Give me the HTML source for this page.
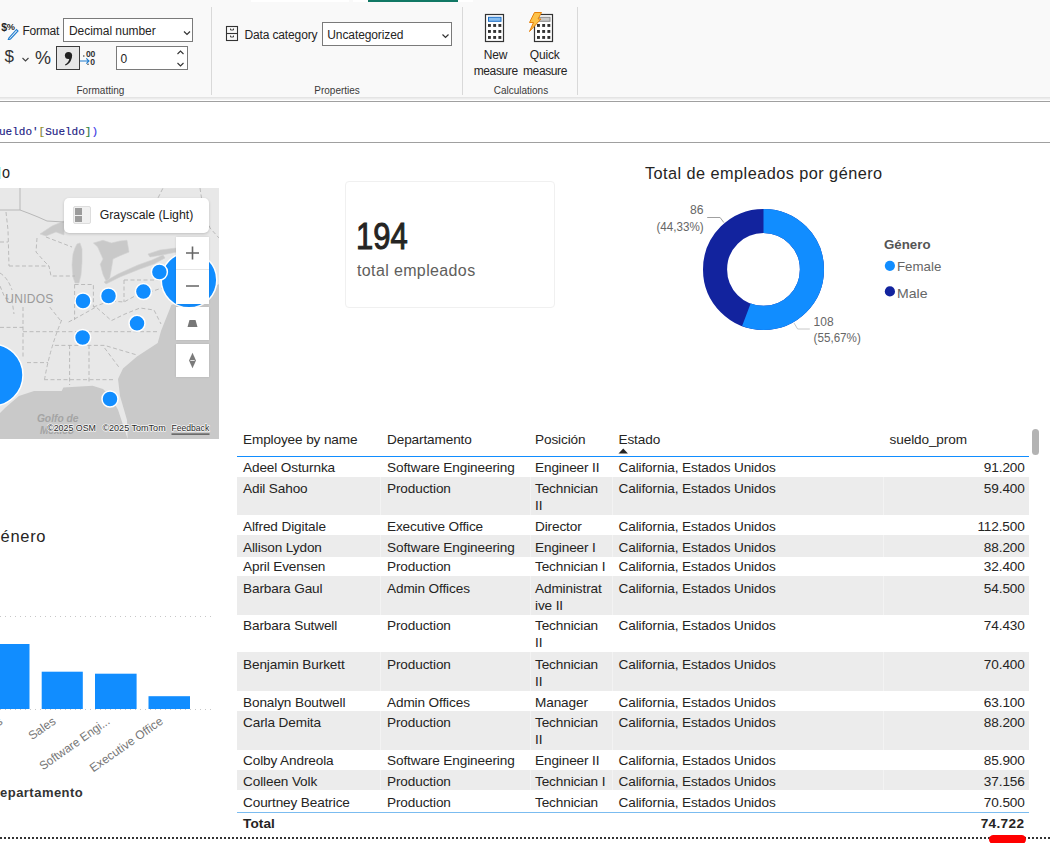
<!DOCTYPE html>
<html><head><meta charset="utf-8">
<style>
*{margin:0;padding:0;box-sizing:border-box}
html,body{width:1050px;height:843px;overflow:hidden;background:#fff}
body{position:relative;font-family:"Liberation Sans",sans-serif;color:#252423}
.a{position:absolute;white-space:nowrap;line-height:1}
#ribbon{position:absolute;left:0;top:0;width:1050px;height:97px;background:#f9f9f9}
.sep{position:absolute;top:7px;width:1px;height:88px;background:#d9d9d9}
.glabel{position:absolute;font-size:10px;color:#3b3a39;line-height:1}
.box{position:absolute;background:#fff;border:1px solid #7a7a7a}
.rt{font-size:12px;color:#252423}
.tt{font-size:13.6px;color:#252423;letter-spacing:-0.12px}
</style></head><body>

<div id="ribbon">
  <div class="a" style="left:251px;top:0;width:98px;height:2px;background:#fff"></div>
  <div class="a" style="left:353px;top:0;width:15px;height:2px;background:#fff"></div>
  <div class="a" style="left:368px;top:0;width:90px;height:2px;background:#117865"></div>
  <div class="a" style="left:458px;top:0;width:15px;height:2px;background:#fff"></div>
</div>

<!-- Formatting group -->
<svg class="a" style="left:0;top:20px" width="22" height="20" viewBox="0 0 22 20">
  <text x="1.2" y="11.2" font-family="Liberation Sans" font-weight="bold" font-size="10.5" fill="#252423">$</text>
  <text x="6.8" y="9.6" font-family="Liberation Sans" font-weight="bold" font-size="9.2" fill="#252423">%</text>
  <path d="M9 17.8 L16.5 9.5 L18 11 L10.5 19 L8.2 19.8 Z" fill="none" stroke="#1e7ccf" stroke-width="1.1"/>
</svg>
<div class="a rt" style="left:22.5px;top:25px;font-size:12px;letter-spacing:-0.25px">Format</div>
<div class="box" style="left:63px;top:18px;width:130px;height:24px"></div>
<div class="a rt" style="left:69px;top:25px;letter-spacing:-0.05px">Decimal number</div>
<svg class="a" style="left:182.5px;top:29.5px" width="8" height="6" viewBox="0 0 8 6"><path d="M1 1.5 L4 4.5 L7 1.5" fill="none" stroke="#333" stroke-width="1.2"/></svg>

<div class="a" style="left:4.5px;top:48px;font-size:17px;color:#333">$</div>
<svg class="a" style="left:21px;top:56px" width="9" height="7" viewBox="0 0 9 7"><path d="M1.5 2 L4.5 5 L7.5 2" fill="none" stroke="#444" stroke-width="1.1"/></svg>
<div class="a" style="left:35px;top:49px;font-size:18px;color:#333">%</div>
<div class="a" style="left:56px;top:46px;width:24px;height:24px;background:#e6e6e6;border:1px solid #3c3c3c"></div>
<svg class="a" style="left:62px;top:50px" width="12" height="17" viewBox="0 0 12 17"><circle cx="6.5" cy="5.5" r="3.6" fill="#222"/><path d="M9.8 5.5 C10 10 8 13.5 3.5 15.5 L3 14.5 C6 13 7.5 10.5 7.2 7.5 Z" fill="#222"/></svg>
<svg class="a" style="left:79px;top:48px" width="18" height="19" viewBox="0 0 18 19">
  <text x="7" y="8.6" font-family="Liberation Sans" font-weight="bold" font-size="8.6" fill="#333" letter-spacing="-0.3">00</text>
  <text x="11.2" y="16.8" font-family="Liberation Sans" font-weight="bold" font-size="8.6" fill="#333">0</text>
  <circle cx="4.8" cy="8" r="0.75" fill="#333"/><circle cx="9" cy="16.3" r="0.75" fill="#333"/>
  <path d="M1 13 H10 M7.3 10.3 L10 13 L7.3 15.7" fill="none" stroke="#1e7ccf" stroke-width="1.1"/>
</svg>
<div class="box" style="left:116px;top:46px;width:72px;height:24px"></div>
<div class="a rt" style="left:120.5px;top:53px">0</div>
<svg class="a" style="left:176px;top:49px" width="9" height="19" viewBox="0 0 9 19"><path d="M1.5 5 L4.5 2 L7.5 5 M1.5 14 L4.5 17 L7.5 14" fill="none" stroke="#333" stroke-width="1.1"/></svg>
<div class="glabel" style="left:76.5px;top:86px">Formatting</div>
<div class="sep" style="left:211px"></div>

<!-- Properties group -->
<svg class="a" style="left:225px;top:25px" width="14" height="17" viewBox="0 0 14 17"><rect x="1.5" y="1.5" width="11" height="14" fill="none" stroke="#333" stroke-width="1.1"/><path d="M1.5 8.5 H12.5" stroke="#333" stroke-width="1.1"/><path d="M5.5 3.5 V5 H8.5 V3.5 M5.5 10.5 V12 H8.5 V10.5" fill="none" stroke="#333" stroke-width="0.9"/></svg>
<div class="a rt" style="left:244.4px;top:29px;letter-spacing:-0.13px">Data category</div>
<div class="box" style="left:322px;top:22px;width:130px;height:24px"></div>
<div class="a rt" style="left:327.3px;top:29px;letter-spacing:-0.1px">Uncategorized</div>
<svg class="a" style="left:441px;top:33px" width="9" height="7" viewBox="0 0 9 7"><path d="M1.5 1.5 L4.5 4.5 L7.5 1.5" fill="none" stroke="#333" stroke-width="1.2"/></svg>
<div class="glabel" style="left:314.3px;top:86px">Properties</div>
<div class="sep" style="left:462px"></div>

<!-- Calculations group -->
<svg class="a" style="left:484px;top:13px" width="22" height="30" viewBox="0 0 22 30">
  <rect x="1.5" y="1.5" width="18" height="27" fill="#fff" stroke="#333" stroke-width="1.2"/>
  <rect x="4.5" y="4.3" width="12.5" height="4" fill="#86bdf0" stroke="#1f6fc5" stroke-width="1"/>
  <g fill="#333"><rect x="4" y="11" width="2.9" height="2.9"/><rect x="9.2" y="11" width="2.9" height="2.9"/><rect x="14.4" y="11" width="2.9" height="2.9"/>
  <rect x="4" y="17" width="2.9" height="2.9"/><rect x="9.2" y="17" width="2.9" height="2.9"/><rect x="14.4" y="17" width="2.9" height="2.9"/>
  <rect x="4" y="23" width="2.9" height="2.9"/><rect x="9.2" y="23" width="2.9" height="2.9"/><rect x="14.4" y="23" width="2.9" height="2.9"/></g>
</svg>
<svg class="a" style="left:527px;top:11px" width="30" height="32" viewBox="0 0 30 32">
  <rect x="7.5" y="3.5" width="18" height="27" fill="#fff" stroke="#333" stroke-width="1.2"/>
  <rect x="10.5" y="6.3" width="12.5" height="4" fill="#c8c8c8" stroke="#8a8a8a" stroke-width="1"/>
  <g fill="#333"><rect x="10" y="13" width="2.9" height="2.9"/><rect x="15.2" y="13" width="2.9" height="2.9"/><rect x="20.4" y="13" width="2.9" height="2.9"/>
  <rect x="10" y="19" width="2.9" height="2.9"/><rect x="15.2" y="19" width="2.9" height="2.9"/><rect x="20.4" y="19" width="2.9" height="2.9"/>
  <rect x="10" y="25" width="2.9" height="2.9"/><rect x="15.2" y="25" width="2.9" height="2.9"/><rect x="20.4" y="25" width="2.9" height="2.9"/></g>
  <path d="M7.5 1.5 H14.5 L11 8 H14 L2.5 20.5 L6.5 11.5 H2.5 Z" fill="#fcc24a" stroke="#e6800a" stroke-width="1" stroke-linejoin="miter"/>
</svg>
<div class="a rt" style="left:483.7px;top:49px;letter-spacing:-0.14px">New</div>
<div class="a rt" style="left:473.7px;top:65px;letter-spacing:-0.38px">measure</div>
<div class="a rt" style="left:529.7px;top:49px;letter-spacing:-0.14px">Quick</div>
<div class="a rt" style="left:523px;top:65px;letter-spacing:-0.38px">measure</div>
<div class="glabel" style="left:493.7px;top:86px">Calculations</div>
<div class="sep" style="left:577px"></div>

<!-- formula -->
<div class="a" style="left:-1px;top:126.8px;font-family:'Liberation Mono',monospace;font-size:11px;color:#1c1c84;-webkit-text-stroke:0.15px #1c1c84"><span>ueldo'</span><span style="color:#9a9a1a">[</span><span>Sueldo</span><span style="color:#2f8a2f">]</span><span style="color:#3a3aff">)</span></div>

<div class="a" style="left:0;top:97px;width:1050px;height:1px;background:#e4e4e4"></div>
<div class="a" style="left:0;top:98px;width:1050px;height:1px;background:#ececec"></div>
<div class="a" style="left:0;top:99px;width:1050px;height:1px;background:#f3f3f3"></div>
<div class="a" style="left:0;top:101px;width:1050px;height:1px;background:#a0a0a0"></div>
<div class="a" style="left:0;top:142px;width:1050px;height:1px;background:#a0a0a0"></div>

<!-- map title fragment -->
<div class="a" style="left:1.8px;top:165.4px;font-size:16px;color:#252423;transform:scaleX(0.9);transform-origin:0 0">o</div>
<div class="a" style="left:0;top:167px;width:1px;height:12px;background:#b2f7f7"></div>
<svg class="a" style="left:0;top:188px" width="219" height="251" viewBox="0 0 219 251">
  <rect x="0" y="0" width="219" height="251" fill="#e8e8e8"/>
  <!-- atlantic + gulf water -->
  <path d="M219 96 L200 108 L185 112 L171.4 117 L161 143 L157.7 155 L137 168.6 L123 180.6 L118 191 L120 208 L127 232 L127.7 251 L124 240 L118 221.7 L110 208 L103 201 L92.6 197.7 L63.4 199.4 L61.7 203 L34 203 L18.9 208 L5 220 L0 225 L0 251 L219 251 Z" fill="#c9c9c9"/>
  <!-- great lakes -->
  <g fill="#c9c9c9" stroke="#d2d2d2" stroke-width="0.6">
  <path d="M40 46 L52 38 L64 33 L64 47 L56 44 L46 48 Z"/>
  <path d="M77 56 L80 55 L82 61 L82 74 L81 87 L79 95 L75 95 L73 89 L72 77 L73 66 L75 60 Z"/>
  <path d="M93.4 55 L103 52.3 L111.4 55 L120 53 L127 52.3 L129 64 L120 67.7 L113 71 L111.4 81 L109.7 90 L106.3 93.4 L103 86.6 L100.3 76.3 L103 71 L97.7 59 Z"/>
  <path d="M104 94 L118 86 L138 77 L152 72 L163 67 L165 70 L154 76 L140 81 L120 89 L106 96 Z"/>
  <path d="M148 66 L160 62 L176 60 L177 64 L162 67 L150 69 Z"/>
  </g>
  <!-- state borders -->
  <g fill="none" stroke="#b5b5b5" stroke-width="0.9" stroke-dasharray="4 2.5">
    <path d="M6 24 L8 42 L9 78"/>
    <path d="M0 54 H8"/>
    <path d="M9 78 H49 L51 88 H75"/>
    <path d="M37 50 L36 64 L44 73 L49 78"/>
    <path d="M46 49 L72 59"/>
    <path d="M0 85 Q8 90 12 102"/>
    <path d="M74.6 96.5 V132"/>
    <path d="M74.6 96.5 H93.4 V119"/>
    <path d="M124 92 V114 M124 92 H161"/>
    <path d="M93.4 119 L110 113 L124 114 L135 108 L150 104 L162 100"/>
    <path d="M0 139.4 H23 M23 119 V169 M23 143.7 H157"/>
    <path d="M54.9 157.4 H104.6 L137 167"/>
    <path d="M69.6 157 V197 M89 157 V194 M104.6 160 L120 180.6"/>
    <path d="M44 191.7 H113"/>
    <path d="M61.7 132 Q50 160 44.6 191"/>
    <path d="M27 174.6 H48"/>
    <path d="M49.7 119 L61.7 134 M68.6 134 L80 128 L96 119 L111.4 132.6 L125 126 L140 120 L154 122 L161 136"/>
    <path d="M0 98 L5 110 L12 112 L14 126"/>
    <path d="M150 20 L158 10 L163 0 M200 0 L203 20 L210 40 L219 50"/>
  </g>
  <path d="M0 22 H20 V0 M20 22 L28 25 L38 29 L47 33 L64 34" fill="none" stroke="#b8b8b8" stroke-width="1"/>
  <text x="5.3" y="115" font-family="Liberation Sans" font-size="12" textLength="48" lengthAdjust="spacing" fill="#9a9a9a">UNIDOS</text>
  <text x="36.9" y="234.2" font-family="Liberation Sans" font-style="italic" font-weight="bold" font-size="10" fill="#a4a4a4" textLength="41.6" lengthAdjust="spacingAndGlyphs">Golfo de</text>
  <text x="40" y="246" font-family="Liberation Sans" font-style="italic" font-weight="bold" font-size="10" fill="#a4a4a4" textLength="34" lengthAdjust="spacingAndGlyphs">México</text>
  <!-- bubbles -->
  <g fill="#118dff" stroke="#fff" stroke-width="1.5">
    <circle cx="189" cy="92" r="27.8"/>
    <circle cx="-8" cy="187" r="31"/>
    <circle cx="159.4" cy="84" r="8"/>
    <circle cx="143.4" cy="103.6" r="8"/>
    <circle cx="108.5" cy="108" r="8"/>
    <circle cx="83" cy="113" r="8"/>
    <circle cx="137" cy="135.3" r="8"/>
    <circle cx="82.6" cy="149.5" r="8"/>
    <circle cx="110" cy="211" r="8"/>
  </g>
  <!-- attribution -->
  <g font-family="Liberation Sans" font-size="9.8" fill="#2b2b2b" stroke="#fff" stroke-opacity="0.85" stroke-width="1.6" paint-order="stroke" stroke-linejoin="round">
    <text x="47.2" y="242.9" textLength="48.8" lengthAdjust="spacingAndGlyphs">©2025 OSM</text>
    <text x="102.4" y="242.9" textLength="63.3" lengthAdjust="spacingAndGlyphs">©2025 TomTom</text>
    <text x="171.5" y="242.9" textLength="37.7" lengthAdjust="spacingAndGlyphs">Feedback</text>
  </g>
  <rect x="171.5" y="245.5" width="38" height="1.2" fill="#444"/>
</svg>
<!-- style picker -->
<div class="a" style="left:64px;top:198px;width:145px;height:35px;background:#fff;border-radius:5px;box-shadow:0 1px 3px rgba(0,0,0,0.18)"></div>
<div class="a" style="left:73px;top:206px;width:18px;height:18px;background:#f0f0f0;border:1px solid #ddd;border-radius:2px"></div>
<div class="a" style="left:75px;top:208px;width:7px;height:7px;background:#9b9b9b"></div>
<div class="a" style="left:75px;top:216px;width:7px;height:6px;background:#9b9b9b"></div>
<div class="a" style="left:99.7px;top:209px;font-size:12.3px;color:#222">Grayscale (Light)</div>
<!-- zoom controls -->
<div class="a" style="left:176px;top:237px;width:33px;height:67px;background:#fff;box-shadow:0 0 2px rgba(0,0,0,0.12)"></div>
<div class="a" style="left:176px;top:269px;width:33px;height:1px;background:#e6e6e6"></div>
<svg class="a" style="left:176px;top:237px" width="33" height="67" viewBox="0 0 33 67"><path d="M10 16 H23 M16.5 9.5 V22.5 M10 49 H23" stroke="#666" stroke-width="1.6"/></svg>
<div class="a" style="left:176px;top:307px;width:33px;height:33px;background:#fff;box-shadow:0 0 2px rgba(0,0,0,0.12)"></div>
<svg class="a" style="left:176px;top:307px" width="33" height="33" viewBox="0 0 33 33"><path d="M13.5 13 H19.5 L21.5 20 H11.5 Z" fill="#777"/></svg>
<div class="a" style="left:176px;top:344px;width:33px;height:33px;background:#fff;box-shadow:0 0 2px rgba(0,0,0,0.12)"></div>
<svg class="a" style="left:176px;top:344px" width="33" height="33" viewBox="0 0 33 33"><path d="M16.5 8.8 L20 16.5 L16.5 24.2 L13 16.5 Z" fill="#7a7a7a"/><path d="M14.3 16.5 H18.7" stroke="#e0e0e0" stroke-width="1"/></svg>

<!-- card -->
<div class="a" style="left:345px;top:181px;width:210px;height:127px;border:1px solid #f0f0f0;border-radius:4px"></div>
<div class="a" style="left:355.5px;top:218.6px;font-size:36px;color:#252423;transform:scaleX(0.86);transform-origin:0 0;-webkit-text-stroke:1px #252423">194</div>
<div class="a" style="left:357px;top:262.5px;font-size:16px;letter-spacing:0.37px;color:#605e5c">total empleados</div>
<!-- donut -->
<div class="a" style="left:645px;top:165px;font-size:16.3px;letter-spacing:0.45px;color:#252423">Total de empleados por género</div>
<svg class="a" style="left:640px;top:190px" width="320" height="170" viewBox="640 190 320 170">
  <circle cx="763.5" cy="269.4" r="48.45" fill="none" stroke="#12239e" stroke-width="24.1"/>
  <circle cx="763.5" cy="269.4" r="48.45" fill="none" stroke="#118dff" stroke-width="24.1" stroke-dasharray="169.46 1000" transform="rotate(-90 763.5 269.4)"/>
  <path d="M707.2 217.5 H720.1 L723.9 222.6" fill="none" stroke="#a0a0a0" stroke-width="1"/>
  <path d="M794.1 323.1 L797.6 329 H809.8" fill="none" stroke="#c8c8c8" stroke-width="1"/>
  <g font-family="Liberation Sans" font-size="12" fill="#666">
    <text x="690" y="213.7" textLength="13.5" lengthAdjust="spacingAndGlyphs">86</text>
    <text x="656.5" y="230.6" textLength="47.2" lengthAdjust="spacingAndGlyphs">(44,33%)</text>
    <text x="813.6" y="325.7" textLength="20" lengthAdjust="spacingAndGlyphs">108</text>
    <text x="813.6" y="342" textLength="47.2" lengthAdjust="spacingAndGlyphs">(55,67%)</text>
  </g>
  <circle cx="889.9" cy="265.8" r="5.1" fill="#118dff"/>
  <circle cx="889.9" cy="291.4" r="5.1" fill="#12239e"/>
  <g font-family="Liberation Sans" font-size="13.2" fill="#666">
    <text x="884" y="248.7" font-weight="bold" font-size="13" fill="#555" textLength="46.5" lengthAdjust="spacingAndGlyphs">Género</text>
    <text x="897" y="270.7" textLength="44.3" lengthAdjust="spacingAndGlyphs">Female</text>
    <text x="897" y="297.8" textLength="30.5" lengthAdjust="spacingAndGlyphs">Male</text>
  </g>
</svg>

<!-- bar chart -->
<div class="a" style="left:0.5px;top:528.3px;font-size:16.5px;letter-spacing:0.7px;color:#252423">énero</div>
<svg class="a" style="left:0;top:600px" width="220" height="220" viewBox="0 600 220 220">
  <line x1="0" y1="616.5" x2="212" y2="616.5" stroke="#c8c8c8" stroke-width="1" stroke-dasharray="1 4"/>
  <g fill="#118dff">
    <rect x="0" y="644" width="29.5" height="65"/>
    <rect x="41.7" y="671.7" width="41.1" height="37.3"/>
    <rect x="95" y="673.7" width="41.6" height="35.3"/>
    <rect x="148.5" y="696.2" width="41.5" height="12.8"/>
  </g>
  <line x1="0" y1="709.5" x2="212" y2="709.5" stroke="#c8c8c8" stroke-width="1" stroke-dasharray="1 4"/>
  <g font-family="Liberation Sans" font-size="12" fill="#767676" text-anchor="end">
    <text transform="translate(3.5 723) rotate(-35)">s</text>
    <text transform="translate(56.6 723) rotate(-35)">Sales</text>
    <text transform="translate(110.7 723) rotate(-35)" textLength="82.7" lengthAdjust="spacingAndGlyphs">Software Engi...</text>
    <text transform="translate(164 723) rotate(-35)">Executive Office</text>
  </g>
  <text x="0" y="797" font-family="Liberation Sans" font-weight="bold" font-size="13" fill="#333" textLength="82.8" lengthAdjust="spacing">epartamento</text>
</svg>
<div class="a" style="left:0;top:837px;width:1050px;height:2px;background-image:linear-gradient(to right,#333 0,#333 2px,transparent 2px);background-size:4px 2px"></div>

<!-- table -->
<div class="a" style="left:237px;top:420px;width:792px;height:416px;overflow:hidden">
<div class="a tt" style="left:6.0px;top:13.09px;">Employee by name</div>
<div class="a tt" style="left:150.0px;top:13.09px;">Departamento</div>
<div class="a tt" style="left:298.0px;top:13.09px;">Posición</div>
<div class="a tt" style="left:381.5px;top:13.09px;">Estado</div>
<div class="a tt" style="left:652.6px;top:13.09px;">sueldo_prom</div>
<svg class="a" style="left:381px;top:27.5px" width="11" height="6" viewBox="0 0 11 6"><path d="M0.5 5.5 L5.2 0.5 L9.9 5.5 Z" fill="#252423"/></svg>
<div class="a" style="left:0;top:36px;width:792px;height:1px;background:#118dff"></div>
<div class="a tt" style="left:6.0px;top:40.59px;">Adeel Osturnka</div>
<div class="a tt" style="left:150.0px;top:40.59px;">Software Engineering</div>
<div class="a tt" style="left:298.0px;top:40.59px;">Engineer II</div>
<div class="a tt" style="left:381.5px;top:40.59px;">California, Estados Unidos</div>
<div class="a tt" style="right:4.3px;top:40.59px">91.200</div>
<div class="a" style="left:0;top:56.90px;width:792px;height:38.40px;background:#ececec"></div>
<div class="a" style="left:143.0px;top:56.90px;width:1px;height:38.40px;background:#f3f3f3"></div>
<div class="a" style="left:292.5px;top:56.90px;width:1px;height:38.40px;background:#f3f3f3"></div>
<div class="a" style="left:375.4px;top:56.90px;width:1px;height:38.40px;background:#f3f3f3"></div>
<div class="a" style="left:646.0px;top:56.90px;width:1px;height:38.40px;background:#f3f3f3"></div>
<div class="a tt" style="left:6.0px;top:61.79px;">Adil Sahoo</div>
<div class="a tt" style="left:150.0px;top:61.79px;">Production</div>
<div class="a tt" style="left:298.0px;top:61.79px;">Technician</div>
<div class="a tt" style="left:298.0px;top:78.79px;">II</div>
<div class="a tt" style="left:381.5px;top:61.79px;">California, Estados Unidos</div>
<div class="a tt" style="right:4.3px;top:61.79px">59.400</div>
<div class="a tt" style="left:6.0px;top:99.59px;">Alfred Digitale</div>
<div class="a tt" style="left:150.0px;top:99.59px;">Executive Office</div>
<div class="a tt" style="left:298.0px;top:99.59px;">Director</div>
<div class="a tt" style="left:381.5px;top:99.59px;">California, Estados Unidos</div>
<div class="a tt" style="right:4.3px;top:99.59px">112.500</div>
<div class="a" style="left:0;top:115.20px;width:792px;height:21.80px;background:#ececec"></div>
<div class="a" style="left:143.0px;top:115.20px;width:1px;height:21.80px;background:#f3f3f3"></div>
<div class="a" style="left:292.5px;top:115.20px;width:1px;height:21.80px;background:#f3f3f3"></div>
<div class="a" style="left:375.4px;top:115.20px;width:1px;height:21.80px;background:#f3f3f3"></div>
<div class="a" style="left:646.0px;top:115.20px;width:1px;height:21.80px;background:#f3f3f3"></div>
<div class="a tt" style="left:6.0px;top:120.59px;">Allison Lydon</div>
<div class="a tt" style="left:150.0px;top:120.59px;">Software Engineering</div>
<div class="a tt" style="left:298.0px;top:120.59px;">Engineer I</div>
<div class="a tt" style="left:381.5px;top:120.59px;">California, Estados Unidos</div>
<div class="a tt" style="right:4.3px;top:120.59px">88.200</div>
<div class="a tt" style="left:6.0px;top:140.49px;">April Evensen</div>
<div class="a tt" style="left:150.0px;top:140.49px;">Production</div>
<div class="a tt" style="left:298.0px;top:140.49px;">Technician I</div>
<div class="a tt" style="left:381.5px;top:140.49px;">California, Estados Unidos</div>
<div class="a tt" style="right:4.3px;top:140.49px">32.400</div>
<div class="a" style="left:0;top:156.20px;width:792px;height:38.60px;background:#ececec"></div>
<div class="a" style="left:143.0px;top:156.20px;width:1px;height:38.60px;background:#f3f3f3"></div>
<div class="a" style="left:292.5px;top:156.20px;width:1px;height:38.60px;background:#f3f3f3"></div>
<div class="a" style="left:375.4px;top:156.20px;width:1px;height:38.60px;background:#f3f3f3"></div>
<div class="a" style="left:646.0px;top:156.20px;width:1px;height:38.60px;background:#f3f3f3"></div>
<div class="a tt" style="left:6.0px;top:161.69px;">Barbara Gaul</div>
<div class="a tt" style="left:150.0px;top:161.69px;">Admin Offices</div>
<div class="a tt" style="left:298.0px;top:161.69px;">Administrat</div>
<div class="a tt" style="left:298.0px;top:178.69px;">ive II</div>
<div class="a tt" style="left:381.5px;top:161.69px;">California, Estados Unidos</div>
<div class="a tt" style="right:4.3px;top:161.69px">54.500</div>
<div class="a tt" style="left:6.0px;top:199.49px;">Barbara Sutwell</div>
<div class="a tt" style="left:150.0px;top:199.49px;">Production</div>
<div class="a tt" style="left:298.0px;top:199.49px;">Technician</div>
<div class="a tt" style="left:298.0px;top:216.49px;">II</div>
<div class="a tt" style="left:381.5px;top:199.49px;">California, Estados Unidos</div>
<div class="a tt" style="right:4.3px;top:199.49px">74.430</div>
<div class="a" style="left:0;top:232.30px;width:792px;height:38.40px;background:#ececec"></div>
<div class="a" style="left:143.0px;top:232.30px;width:1px;height:38.40px;background:#f3f3f3"></div>
<div class="a" style="left:292.5px;top:232.30px;width:1px;height:38.40px;background:#f3f3f3"></div>
<div class="a" style="left:375.4px;top:232.30px;width:1px;height:38.40px;background:#f3f3f3"></div>
<div class="a" style="left:646.0px;top:232.30px;width:1px;height:38.40px;background:#f3f3f3"></div>
<div class="a tt" style="left:6.0px;top:237.59px;">Benjamin Burkett</div>
<div class="a tt" style="left:150.0px;top:237.59px;">Production</div>
<div class="a tt" style="left:298.0px;top:237.59px;">Technician</div>
<div class="a tt" style="left:298.0px;top:254.59px;">II</div>
<div class="a tt" style="left:381.5px;top:237.59px;">California, Estados Unidos</div>
<div class="a tt" style="right:4.3px;top:237.59px">70.400</div>
<div class="a tt" style="left:6.0px;top:275.79px;">Bonalyn Boutwell</div>
<div class="a tt" style="left:150.0px;top:275.79px;">Admin Offices</div>
<div class="a tt" style="left:298.0px;top:275.79px;">Manager</div>
<div class="a tt" style="left:381.5px;top:275.79px;">California, Estados Unidos</div>
<div class="a tt" style="right:4.3px;top:275.79px">63.100</div>
<div class="a" style="left:0;top:290.90px;width:792px;height:38.70px;background:#ececec"></div>
<div class="a" style="left:143.0px;top:290.90px;width:1px;height:38.70px;background:#f3f3f3"></div>
<div class="a" style="left:292.5px;top:290.90px;width:1px;height:38.70px;background:#f3f3f3"></div>
<div class="a" style="left:375.4px;top:290.90px;width:1px;height:38.70px;background:#f3f3f3"></div>
<div class="a" style="left:646.0px;top:290.90px;width:1px;height:38.70px;background:#f3f3f3"></div>
<div class="a tt" style="left:6.0px;top:295.69px;">Carla Demita</div>
<div class="a tt" style="left:150.0px;top:295.69px;">Production</div>
<div class="a tt" style="left:298.0px;top:295.69px;">Technician</div>
<div class="a tt" style="left:298.0px;top:312.69px;">II</div>
<div class="a tt" style="left:381.5px;top:295.69px;">California, Estados Unidos</div>
<div class="a tt" style="right:4.3px;top:295.69px">88.200</div>
<div class="a tt" style="left:6.0px;top:334.09px;">Colby Andreola</div>
<div class="a tt" style="left:150.0px;top:334.09px;">Software Engineering</div>
<div class="a tt" style="left:298.0px;top:334.09px;">Engineer II</div>
<div class="a tt" style="left:381.5px;top:334.09px;">California, Estados Unidos</div>
<div class="a tt" style="right:4.3px;top:334.09px">85.900</div>
<div class="a" style="left:0;top:349.70px;width:792px;height:20.60px;background:#ececec"></div>
<div class="a" style="left:143.0px;top:349.70px;width:1px;height:20.60px;background:#f3f3f3"></div>
<div class="a" style="left:292.5px;top:349.70px;width:1px;height:20.60px;background:#f3f3f3"></div>
<div class="a" style="left:375.4px;top:349.70px;width:1px;height:20.60px;background:#f3f3f3"></div>
<div class="a" style="left:646.0px;top:349.70px;width:1px;height:20.60px;background:#f3f3f3"></div>
<div class="a tt" style="left:6.0px;top:354.79px;">Colleen Volk</div>
<div class="a tt" style="left:150.0px;top:354.79px;">Production</div>
<div class="a tt" style="left:298.0px;top:354.79px;">Technician I</div>
<div class="a tt" style="left:381.5px;top:354.79px;">California, Estados Unidos</div>
<div class="a tt" style="right:4.3px;top:354.79px">37.156</div>
<div class="a tt" style="left:6.0px;top:375.99px;">Courtney Beatrice</div>
<div class="a tt" style="left:150.0px;top:375.99px;">Production</div>
<div class="a tt" style="left:298.0px;top:375.99px;">Technician</div>
<div class="a tt" style="left:298.0px;top:392.99px;">II</div>
<div class="a tt" style="left:381.5px;top:375.99px;">California, Estados Unidos</div>
<div class="a tt" style="right:4.3px;top:375.99px">70.500</div>
<div class="a" style="left:0;top:392px;width:792px;height:30px;background:#fff"></div>
<div class="a" style="left:0;top:392px;width:792px;height:1px;background:#7bbcf0"></div>
<div class="a tt" style="left:6.0px;top:396.69px;font-weight:bold;letter-spacing:0.1px">Total</div>
<div class="a tt" style="right:4.7px;top:396.69px;font-weight:bold;letter-spacing:0.35px">74.722</div>
</div>
<div class="a" style="left:1032px;top:429px;width:7px;height:26px;border-radius:3.5px;background:#b3b3b3"></div>
<div class="a" style="left:989px;top:834.5px;width:37px;height:9px;border-radius:4.5px;background:#ff0000"></div>
<!-- /table -->
</body></html>
